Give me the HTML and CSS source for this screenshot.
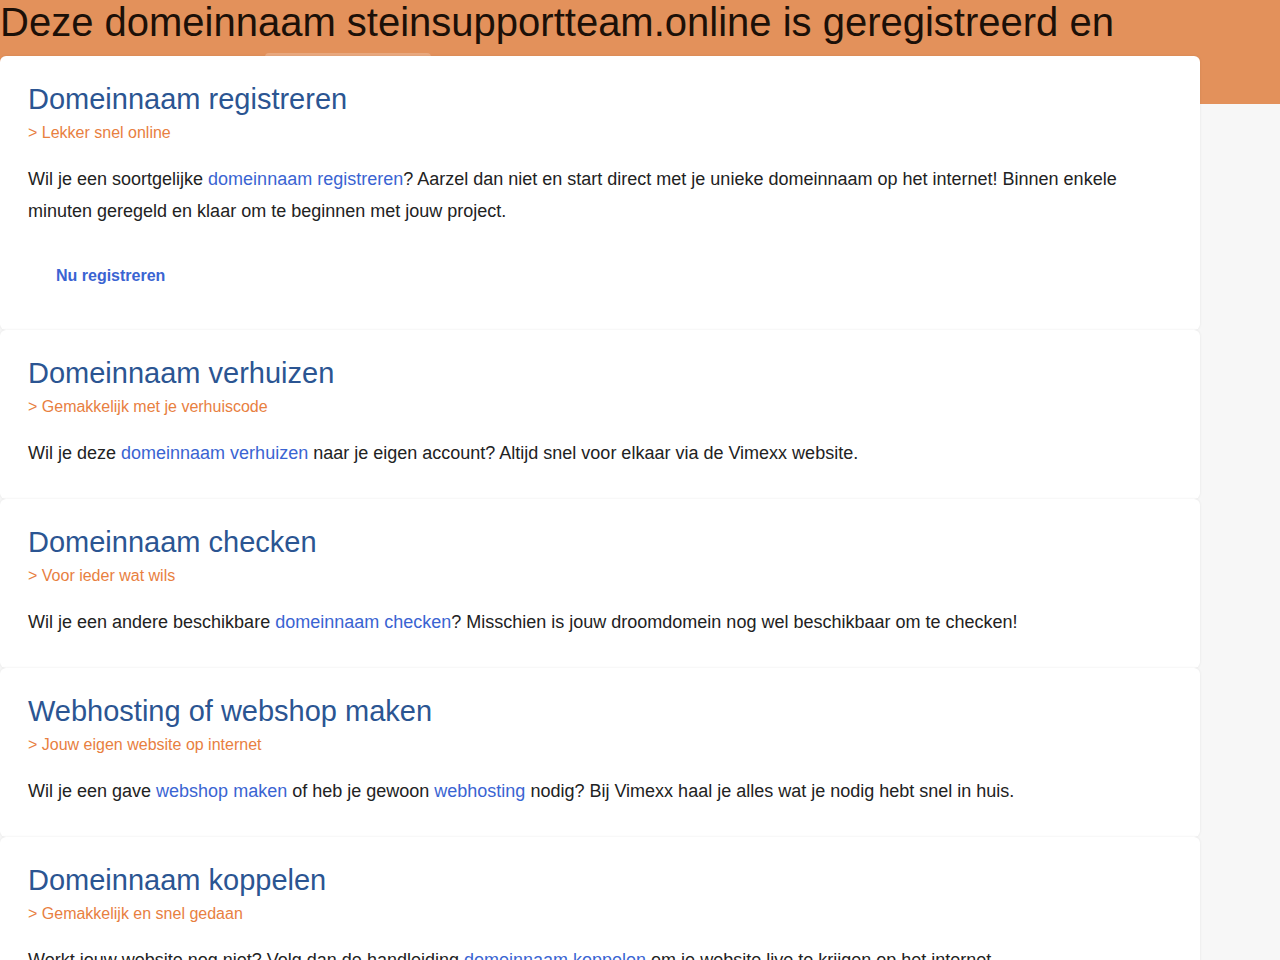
FILE: index.html
```html
<!DOCTYPE html>
<html lang="nl">
<head>
<meta charset="utf-8">
<title>steinsupportteam.online</title>
<link rel="stylesheet" href="styles.css">
</head>
<body>
<header class="hero">
  <h1 class="hero-title">Deze domeinnaam steinsupportteam.online is geregistreerd en beschikbaar gesteld door Vimexx</h1>
  <div class="hero-tab"></div>
</header>
<main class="cards">
  <section class="card">
    <h2 class="card-title">Domeinnaam registreren</h2>
    <p class="card-sub">&gt; Lekker snel online</p>
    <p class="card-text">Wil je een soortgelijke <a href="#">domeinnaam registreren</a>? Aarzel dan niet en start direct met je unieke domeinnaam op het internet! Binnen enkele minuten geregeld en klaar om te beginnen met jouw project.</p>
    <a class="card-btn" href="#">Nu registreren</a>
  </section>
  <section class="card">
    <h2 class="card-title">Domeinnaam verhuizen</h2>
    <p class="card-sub">&gt; Gemakkelijk met je verhuiscode</p>
    <p class="card-text">Wil je deze <a href="#">domeinnaam verhuizen</a> naar je eigen account? Altijd snel voor elkaar via de Vimexx website.</p>
  </section>
  <section class="card">
    <h2 class="card-title">Domeinnaam checken</h2>
    <p class="card-sub">&gt; Voor ieder wat wils</p>
    <p class="card-text">Wil je een andere beschikbare <a href="#">domeinnaam checken</a>? Misschien is jouw droomdomein nog wel beschikbaar om te checken!</p>
  </section>
  <section class="card">
    <h2 class="card-title">Webhosting of webshop maken</h2>
    <p class="card-sub">&gt; Jouw eigen website op internet</p>
    <p class="card-text">Wil je een gave <a href="#">webshop maken</a> of heb je gewoon <a href="#">webhosting</a> nodig? Bij Vimexx haal je alles wat je nodig hebt snel in huis.</p>
  </section>
  <section class="card">
    <h2 class="card-title">Domeinnaam koppelen</h2>
    <p class="card-sub">&gt; Gemakkelijk en snel gedaan</p>
    <p class="card-text">Werkt jouw website nog niet? Volg dan de handleiding <a href="#">domeinnaam koppelen</a> om je website live te krijgen op het internet.</p>
  </section>
</main>
</body>
</html>
```
FILE: styles.css
```css
html, body {
  margin: 0;
  padding: 0;
}
body {
  background: #f7f7f7;
  font-family: "Liberation Sans", Arial, sans-serif;
  color: #222222;
}
.hero {
  background: #e3915b;
  height: 104px;
}
.hero-title {
  margin: 0;
  font-weight: normal;
  font-size: 40px;
  line-height: 44px;
  height: 44px;
  overflow: hidden;
  color: #1c1008;
  max-width: 1180px;
}
.hero-tab {
  margin: 9px 0 0 265px;
  width: 166px;
  height: 8px;
  border-radius: 4px;
  background: rgba(255, 255, 255, 0.22);
}
.cards {
  margin-top: -48px;
  width: 1200px;
  display: flex;
  flex-direction: column;
  position: relative;
}
.card {
  background: #ffffff;
  border-radius: 6px;
  box-shadow: 0 0 3px rgba(0, 0, 0, 0.08);
  padding: 27px 28px 30px;
}
.card-title {
  margin: 0;
  font-weight: normal;
  font-size: 29px;
  line-height: 32px;
  color: #2b5592;
}
.card-sub {
  margin: 8px 0 0;
  font-size: 16px;
  line-height: 20px;
  color: #e8803f;
}
.card-text {
  margin: 20px 0 0;
  font-size: 18px;
  line-height: 32px;
  color: #222222;
}
.card-text a {
  color: #3a64d2;
  text-decoration: none;
}
.card-btn {
  display: inline-block;
  margin-top: 25px;
  padding: 14px 28px;
  font-size: 16px;
  line-height: 20px;
  font-weight: bold;
  color: #3a64d2;
  text-decoration: none;
}
```
